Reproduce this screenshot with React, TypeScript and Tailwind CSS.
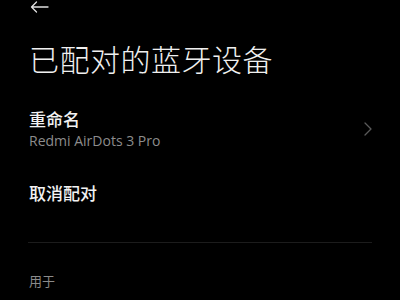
import React from "react";

export default function App() {
  const font = { fontFamily: '"Noto Sans CJK SC", "Noto Sans", sans-serif' };
  return (
    <div className="w-[400px] h-[300px] bg-black overflow-hidden text-white" style={font}>
      <div className="pl-[30px] h-[13px] flex items-center">
        <svg width="19" height="12" viewBox="0 0 19 12" fill="none" stroke="#e0e0e0" strokeWidth="1.3" strokeLinecap="round" strokeLinejoin="round">
          <path d="M18 6H1.5M6.5 1L1.5 6l5 5" />
        </svg>
      </div>
      <div className="pl-[29px] pt-[27px] text-[30px] leading-[36px] font-extralight text-[#f0f0f0] tracking-[0.5px]">
        已配对的蓝牙设备
      </div>
      <div className="pl-[29px] pr-[28px] pt-[31px] flex items-center justify-between">
        <div className="flex flex-col">
          <div className="text-[17px] leading-[24px] font-medium text-[#f2f2f2]">重命名</div>
          <div className="text-[14px] leading-[19px] text-[#8c8c8c] font-['Open_Sans',sans-serif]">Redmi AirDots 3 Pro</div>
        </div>
        <svg width="8" height="14" viewBox="0 0 8 14" fill="none" stroke="#5a5a5a" strokeWidth="1.3" strokeLinecap="round" strokeLinejoin="round">
          <path d="M1 1l6 6-6 6" />
        </svg>
      </div>
      <div className="pl-[29px] pt-[31px] text-[17px] leading-[24px] font-medium text-[#f2f2f2]">取消配对</div>
      <div className="mx-[28px] mt-[37px] h-px bg-[#1c1c1c]" />
      <div className="pl-[29px] pt-[29px] text-[13px] leading-[18px] text-[#8a8a8a]">用于</div>
    </div>
  );
}
